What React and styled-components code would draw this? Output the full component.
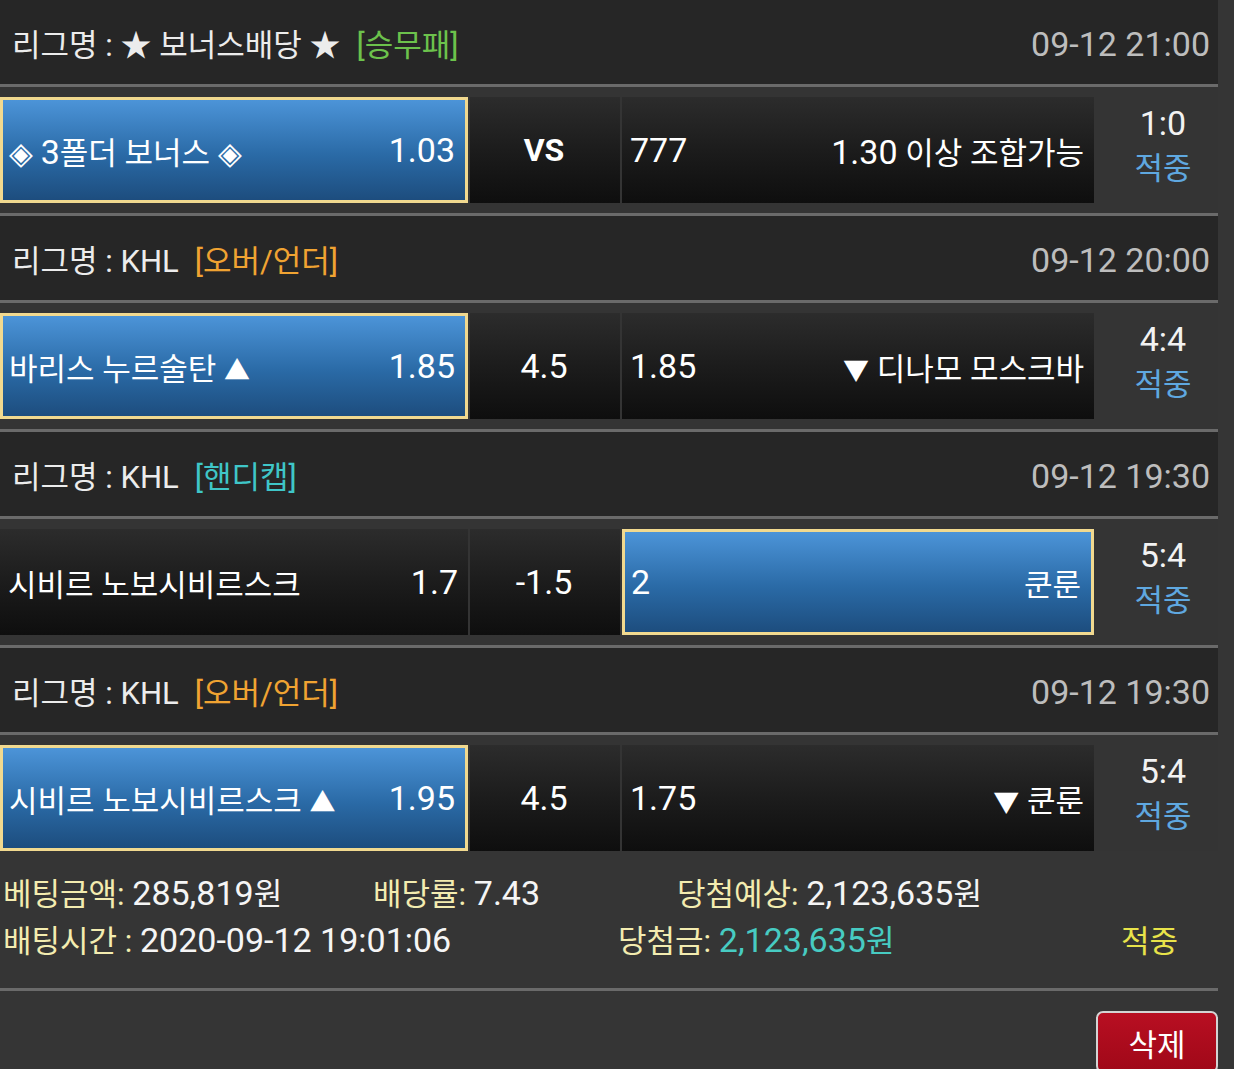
import React from "react";
import styled, { createGlobalStyle } from "styled-components";

const GlobalStyle = createGlobalStyle`
  html, body {
    margin: 0;
    padding: 0;
    background: #353535;
  }
  body {
    font-family: Roboto, "Noto Sans CJK KR", sans-serif;
    color: #f2f2f2;
  }
`;

const Page = styled.div`
  width: 1218px;
  font-size: 31px;
`;

const Header = styled.div`
  height: 84px;
  display: flex;
  align-items: center;
  justify-content: space-between;
  padding: 0 8px 0 12px;
  background: #262626;
  border-bottom: 3px solid #6a6a6a;
  color: #ececec;
`;

const League = styled.div`
  display: flex;
  align-items: center;
  gap: 16px;
`;

const Tag = styled.span`
  color: ${(p) => p.$color};
`;

const Num = styled.span`
  font-size: 34px;
`;

const Arrow = styled.span`
  font-size: 26px;
`;

const DateText = styled(Num)`
  color: #bdbdbd;
  padding-top: 4px;
`;

const MatchRow = styled.div`
  display: flex;
  align-items: center;
  gap: 2px;
  padding: 10px 0 ${(p) => (p.$last ? "0" : "10px")};
  background: #343434;
  border-bottom: ${(p) => (p.$last ? "none" : "3px solid #6a6a6a")};
`;

const Cell = styled.div`
  box-sizing: border-box;
  height: 106px;
  width: ${(p) => p.$w}px;
  display: flex;
  align-items: center;
  justify-content: ${(p) => p.$justify || "space-between"};
  padding: 0 10px 0 ${(p) => (p.$selected ? 6 : 8)}px;
  color: #fff;
  background: ${(p) =>
    p.$selected
      ? "linear-gradient(#4c94d8, #2a6aa6 55%, #1d4d7e)"
      : "linear-gradient(#2c2c2c, #1c1c1c 50%, #0e0e0e)"};
  border: ${(p) => (p.$selected ? "3px solid #f1d98f" : "none")};
`;

const Vs = styled.span`
  font-size: 32px;
  font-weight: 700;
`;

const ScoreCol = styled.div`
  flex: 1;
  display: flex;
  flex-direction: column;
  align-items: center;
  line-height: 46px;
  padding: 0 0 8px 12px;
`;

const Hit = styled.span`
  color: ${(p) => p.$color || "#5fa8e0"};
`;

const Summary = styled.div`
  background: #353535;
  padding: 18px 0 28px;
  border-bottom: 3px solid #6a6a6a;
  display: flex;
  flex-direction: column;
  gap: 3px;
`;

const SumRow = styled.div`
  display: flex;
  align-items: center;
  height: 44px;
`;

const SumItem = styled.div`
  width: ${(p) => (p.$w ? `${p.$w}px` : "auto")};
  padding-left: ${(p) => p.$pl ?? 3}px;
  box-sizing: border-box;
  white-space: nowrap;
`;

const Label = styled.span`
  color: #f3ecb0;
`;

const Value = styled.span`
  color: ${(p) => p.$color || "#f5f5f5"};
`;

const Footer = styled.div`
  display: flex;
  justify-content: flex-end;
  padding-top: 20px;
`;

const DeleteButton = styled.button`
  width: 122px;
  height: 62px;
  border: 2px solid #d4d4d4;
  border-radius: 7px;
  background: linear-gradient(#b80f22, #a00818);
  color: #fff;
  font-family: Roboto, "Noto Sans CJK KR", sans-serif;
  font-size: 31px;
  cursor: pointer;
`;

const games = [
  {
    league: "★ 보너스배당 ★",
    tag: "[승무패]",
    tagColor: "#6cc24c",
    date: "09-12 21:00",
    home: "◈ 3폴더 보너스 ◈",
    homeOdds: "1.03",
    mid: "VS",
    awayOdds: "777",
    away: "1.30 이상 조합가능",
    pick: "home",
    score: "1:0",
  },
  {
    league: "KHL",
    tag: "[오버/언더]",
    tagColor: "#f0a332",
    date: "09-12 20:00",
    home: "바리스 누르술탄 ▲",
    homeOdds: "1.85",
    mid: "4.5",
    awayOdds: "1.85",
    away: "▼ 디나모 모스크바",
    pick: "home",
    score: "4:4",
  },
  {
    league: "KHL",
    tag: "[핸디캡]",
    tagColor: "#3fc6c8",
    date: "09-12 19:30",
    home: "시비르 노보시비르스크",
    homeOdds: "1.7",
    mid: "-1.5",
    awayOdds: "2",
    away: "쿤룬",
    pick: "away",
    score: "5:4",
  },
  {
    league: "KHL",
    tag: "[오버/언더]",
    tagColor: "#f0a332",
    date: "09-12 19:30",
    home: "시비르 노보시비르스크 ▲",
    homeOdds: "1.95",
    mid: "4.5",
    awayOdds: "1.75",
    away: "▼ 쿤룬",
    pick: "home",
    score: "5:4",
  },
];

// 숫자는 크게, 화살표(▲▼)는 작게
function Mixed({ text }) {
  return text.split(/([\d.,:-]+|[▲▼])/).map((part, i) => {
    if (part === "▲" || part === "▼") return <Arrow key={i}>{part}</Arrow>;
    if (/\d/.test(part) && /^[\d.,:-]+$/.test(part)) return <Num key={i}>{part}</Num>;
    return part;
  });
}

function Game({ game, last }) {
  return (
    <>
      <Header>
        <League>
          <span>
            리그명 : <Mixed text={game.league} />
          </span>
          <Tag $color={game.tagColor}>{game.tag}</Tag>
        </League>
        <DateText>{game.date}</DateText>
      </Header>
      <MatchRow $last={last}>
        <Cell $w={468} $selected={game.pick === "home"}>
          <span>
            <Mixed text={game.home} />
          </span>
          <Num>{game.homeOdds}</Num>
        </Cell>
        <Cell $w={150} $justify="center">
          {game.mid === "VS" ? <Vs>VS</Vs> : <Num>{game.mid}</Num>}
        </Cell>
        <Cell $w={472} $selected={game.pick === "away"}>
          <Num>{game.awayOdds}</Num>
          <span>
            <Mixed text={game.away} />
          </span>
        </Cell>
        <ScoreCol>
          <Num>{game.score}</Num>
          <Hit>적중</Hit>
        </ScoreCol>
      </MatchRow>
    </>
  );
}

export default function App() {
  return (
    <Page>
      <GlobalStyle />
      {games.map((g, i) => (
        <Game key={i} game={g} last={i === games.length - 1} />
      ))}
      <Summary>
        <SumRow>
          <SumItem $w={370}>
            <Label>베팅금액:</Label> <Value><Num>285,819</Num>원</Value>
          </SumItem>
          <SumItem $w={307}>
            <Label>배당률:</Label> <Value><Num>7.43</Num></Value>
          </SumItem>
          <SumItem $pl={0}>
            <Label>당첨예상:</Label> <Value><Num>2,123,635</Num>원</Value>
          </SumItem>
        </SumRow>
        <SumRow>
          <SumItem $w={615}>
            <Label>배팅시간 :</Label> <Value><Num>2020-09-12 19:01:06</Num></Value>
          </SumItem>
          <SumItem $w={506}>
            <Label>당첨금:</Label>{" "}
            <Value $color="#47cbc2">
              <Num>2,123,635</Num>원
            </Value>
          </SumItem>
          <SumItem $pl={0}>
            <Hit $color="#e8e34a">적중</Hit>
          </SumItem>
        </SumRow>
      </Summary>
      <Footer>
        <DeleteButton>삭제</DeleteButton>
      </Footer>
    </Page>
  );
}
